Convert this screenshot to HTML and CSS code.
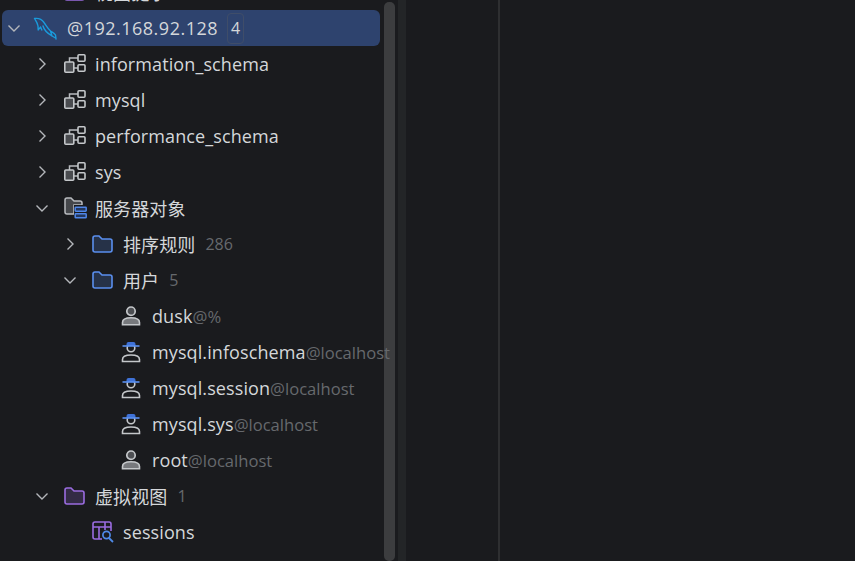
FILE: index.html
```html
<!DOCTYPE html>
<html lang="zh-CN">
<head>
    <title>数据库连接</title>
    <meta charset="UTF-8">
    <meta name="viewport" content="width=device-width, initial-scale=1.0">
    <link rel="stylesheet" href="styles.css">
</head>
<body>
    <svg class="defs" width="0" height="0">
        <symbol id="chev-right" viewBox="0 0 12 12"><path d="M3.5 0.5 L9 6 L3.5 11.5" fill="none" stroke="#b4b7bb" stroke-width="1.4"/></symbol>
        <symbol id="chev-down" viewBox="0 0 12 12"><path d="M0.5 3.5 L6 9 L11.5 3.5" fill="none" stroke="#b4b7bb" stroke-width="1.4"/></symbol>
        <symbol id="schema" viewBox="0 0 22 20">
            <path d="M5.5 9 V4 H14 M10 14 H14" fill="none" stroke="#b9bcc0" stroke-width="1.5"/>
            <rect x="0.8" y="8" width="9" height="10.2" rx="1" fill="#4a4c50" stroke="#c4c7ca" stroke-width="1.6"/>
            <rect x="14" y="0.8" width="7" height="6.4" rx="1" fill="none" stroke="#c4c7ca" stroke-width="1.6"/>
            <rect x="14" y="10.8" width="7" height="6.4" rx="1" fill="none" stroke="#c4c7ca" stroke-width="1.6"/>
        </symbol>
        <symbol id="server-folder" viewBox="0 0 23 22">
            <path d="M1 15 V3 a2 2 0 0 1 2-2 H7 L10 4 H16 a2 2 0 0 1 2 2 V8 H10 V17 H3 a2 2 0 0 1-2-2 Z" fill="#45474b" stroke="#b9bcc0" stroke-width="1.5"/>
            <rect x="10" y="8" width="13" height="14" fill="#1a1b1e"/>
            <rect x="11.2" y="10.2" width="11" height="4" rx="0.6" fill="#24375c" stroke="#4f86e8" stroke-width="1.5"/>
            <rect x="11.2" y="16.8" width="11" height="4" rx="0.6" fill="#24375c" stroke="#4f86e8" stroke-width="1.5"/>
        </symbol>
        <symbol id="folder" viewBox="0 0 21 18">
            <path d="M1 15 V3 a2 2 0 0 1 2-2 H7 L10 4 H18 a2 2 0 0 1 2 2 V15 a2 2 0 0 1-2 2 H3 a2 2 0 0 1-2-2 Z" fill="currentColor" fill-opacity="0.2" stroke="currentColor" stroke-width="1.6"/>
        </symbol>
        <symbol id="user" viewBox="0 0 20 20">
            <circle cx="10" cy="5.2" r="4.2" fill="#4d4f53" stroke="#c4c7ca" stroke-width="1.7"/>
            <path d="M1.5 18.8 V16.5 C1.5 13.5 5 11.8 10 11.8 C15 11.8 18.5 13.5 18.5 16.5 V18.8 Z" fill="#77797d" stroke="#c4c7ca" stroke-width="1.6"/>
        </symbol>
        <symbol id="sys-user" viewBox="0 0 20 22">
            <circle cx="10" cy="7" r="3.8" fill="none" stroke="#c4c7ca" stroke-width="1.6"/>
            <path d="M1.5 20.5 V18.5 C1.5 15.5 5 14 10 14 C15 14 18.5 15.5 18.5 18.5 V20.5 Z" fill="none" stroke="#c4c7ca" stroke-width="1.6"/>
            <path d="M5.5 5 V3 a2 2 0 0 1 2-2 H12.5 a2 2 0 0 1 2 2 V5 Z" fill="#3f72d8"/>
            <path d="M1.5 5 H18.5" stroke="#5a90f0" stroke-width="1.6"/>
        </symbol>
        <symbol id="view" viewBox="0 0 22 22">
            <path d="M10 18 H3 a2 2 0 0 1-2-2 V3 a2 2 0 0 1 2-2 H17 a2 2 0 0 1 2 2 V10 M1 6 H19 M7 6 V18 M13 1 V9" fill="none" stroke="#9a6ce0" stroke-width="1.6"/>
            <circle cx="14.5" cy="14" r="3.6" fill="#1a1b1e" stroke="#4f8ae8" stroke-width="1.7"/>
            <path d="M17 17 L21 21" stroke="#4f8ae8" stroke-width="1.8"/>
        </symbol>
    </svg>

    <div class="tree">
        <div class="row depth-1">
            <span class="arrow"></span>
            <svg class="icon icon-folder purple"><use href="#folder"/></svg>
            <span class="name">视图提示</span>
        </div>

        <div class="row depth-0 selected">
            <span class="arrow"><svg><use href="#chev-down"/></svg></span>
            <!-- mysql dolphin -->
            <svg class="icon-dolphin" viewBox="0 0 24 23">
                <path d="M1.5 1.5 C5 1 9 2.5 11 5.5 C13.5 9 15 12 17.5 14 C20 15.5 22 16.5 22.5 18 L23 22 M1.5 1.5 C3 4 4.5 6 5 9 L5.2 13 C6 11.5 7 11 7.5 10 L8.8 13 M10 9 C11 13 14 16 19 19 L22.5 21 M17.5 14 L19 19" fill="none" stroke="#1a9bdc" stroke-width="1.4" stroke-linejoin="round" stroke-linecap="round"/>
            </svg>
            <span class="host">@192.168.92.128</span>
            <span class="badge">4</span>
        </div>

        <div class="row depth-1">
            <span class="arrow"><svg><use href="#chev-right"/></svg></span>
            <svg class="icon icon-schema"><use href="#schema"/></svg>
            <span class="name">information_schema</span>
        </div>
        <div class="row depth-1">
            <span class="arrow"><svg><use href="#chev-right"/></svg></span>
            <svg class="icon icon-schema"><use href="#schema"/></svg>
            <span class="name">mysql</span>
        </div>
        <div class="row depth-1">
            <span class="arrow"><svg><use href="#chev-right"/></svg></span>
            <svg class="icon icon-schema"><use href="#schema"/></svg>
            <span class="name">performance_schema</span>
        </div>
        <div class="row depth-1">
            <span class="arrow"><svg><use href="#chev-right"/></svg></span>
            <svg class="icon icon-schema"><use href="#schema"/></svg>
            <span class="name">sys</span>
        </div>
        <div class="row depth-1">
            <span class="arrow"><svg><use href="#chev-down"/></svg></span>
            <svg class="icon icon-server"><use href="#server-folder"/></svg>
            <span class="name">服务器对象</span>
        </div>
        <div class="row depth-2">
            <span class="arrow"><svg><use href="#chev-right"/></svg></span>
            <svg class="icon icon-folder blue"><use href="#folder"/></svg>
            <span class="name">排序规则</span>
            <span class="count">286</span>
        </div>
        <div class="row depth-2">
            <span class="arrow"><svg><use href="#chev-down"/></svg></span>
            <svg class="icon icon-folder blue"><use href="#folder"/></svg>
            <span class="name">用户</span>
            <span class="count">5</span>
        </div>
        <div class="row depth-3">
            <span class="arrow"></span>
            <svg class="icon icon-user"><use href="#user"/></svg>
            <span class="name">dusk</span><span class="at">@%</span>
        </div>
        <div class="row depth-3">
            <span class="arrow"></span>
            <svg class="icon icon-sys"><use href="#sys-user"/></svg>
            <span class="name">mysql.infoschema</span><span class="at">@localhost</span>
        </div>
        <div class="row depth-3">
            <span class="arrow"></span>
            <svg class="icon icon-sys"><use href="#sys-user"/></svg>
            <span class="name">mysql.session</span><span class="at">@localhost</span>
        </div>
        <div class="row depth-3">
            <span class="arrow"></span>
            <svg class="icon icon-sys"><use href="#sys-user"/></svg>
            <span class="name">mysql.sys</span><span class="at">@localhost</span>
        </div>
        <div class="row depth-3">
            <span class="arrow"></span>
            <svg class="icon icon-user"><use href="#user"/></svg>
            <span class="name">root</span><span class="at">@localhost</span>
        </div>
        <div class="row depth-1">
            <span class="arrow"><svg><use href="#chev-down"/></svg></span>
            <svg class="icon icon-folder purple"><use href="#folder"/></svg>
            <span class="name">虚拟视图</span>
            <span class="count">1</span>
        </div>
        <div class="row depth-2">
            <span class="arrow"></span>
            <svg class="icon icon-view"><use href="#view"/></svg>
            <span class="name">sessions</span>
        </div>
    </div>

    <div class="scrollbar"><div class="thumb"></div></div>
    <div class="sash"></div>
    <div class="column"></div>
    <div class="pane"></div>
</body>
</html>
```

FILE: styles.css
```css
html, body {
    height: 100%;
}
body {
    margin: 0;
    display: flex;
    overflow: hidden;
    background-color: #1a1b1e;
    color: #d4d7da;
    font-family: "Open Sans", "Noto Sans CJK SC", sans-serif;
    font-size: 18px;
}
.defs {
    position: absolute;
}
/* long names run over the scrollbar, so the tree stays on top */
.tree {
    position: relative;
    z-index: 1;
    width: 384px;
    flex: none;
    margin-top: -26px;
    white-space: nowrap;
}
.row {
    height: 36px;
    display: flex;
    align-items: center;
}
.depth-1 { padding-left: 28px; }
.depth-2 { padding-left: 56px; }
.depth-3 { padding-left: 84px; }
.arrow {
    width: 28px;
    height: 12px;
    flex: none;
    display: flex;
    justify-content: center;
}
.arrow svg {
    width: 12px;
    height: 12px;
}
.icon {
    flex: none;
    margin-left: 8px;
    margin-right: 10px;
}
.icon-schema { width: 22px; height: 20px; margin-right: 9px; }
.icon-server { width: 23px; height: 22px; margin-right: 8px; }
.icon-folder { width: 21px; height: 18px; margin-right: 10px; }
.icon-user { width: 20px; height: 20px; margin-left: 9px; margin-right: 11px; }
.icon-sys { width: 20px; height: 22px; margin-left: 9px; margin-right: 11px; }
.icon-view { width: 22px; height: 22px; margin-right: 9px; }
.blue { color: #5a8fee; }
.purple { color: #9a6ce0; }
.name {
    letter-spacing: 0.1px;
}
.selected {
    margin-left: 2px;
    width: 378px;
    background-color: #2e436e;
    border-radius: 6px;
}
.selected .arrow {
    width: 24px;
}
.icon-dolphin {
    width: 24px;
    height: 23px;
    flex: none;
    margin-left: 7px;
    margin-right: 10px;
}
.host {
    letter-spacing: 0.5px;
}
.badge {
    margin-left: 9px;
    width: 15px;
    height: 29px;
    line-height: 29px;
    text-align: center;
    font-size: 16px;
    border: 1px solid #3f4d69;
    border-radius: 4px;
}
.count {
    margin-left: 10px;
    font-size: 16px;
    color: #66696d;
}
.at {
    font-size: 16.6px;
    color: #66696d;
}
.scrollbar {
    width: 11px;
    flex: none;
    padding-top: 2px;
}
.thumb {
    height: 100%;
    background-color: #3c3d3f;
    border-radius: 5px;
}
.sash {
    width: 8px;
    flex: none;
    margin-left: 3px;
    background-color: #232527;
}
.column {
    width: 92px;
    flex: none;
    border-right: 2px solid #2e2f31;
}
.pane {
    flex: 1;
}
```
